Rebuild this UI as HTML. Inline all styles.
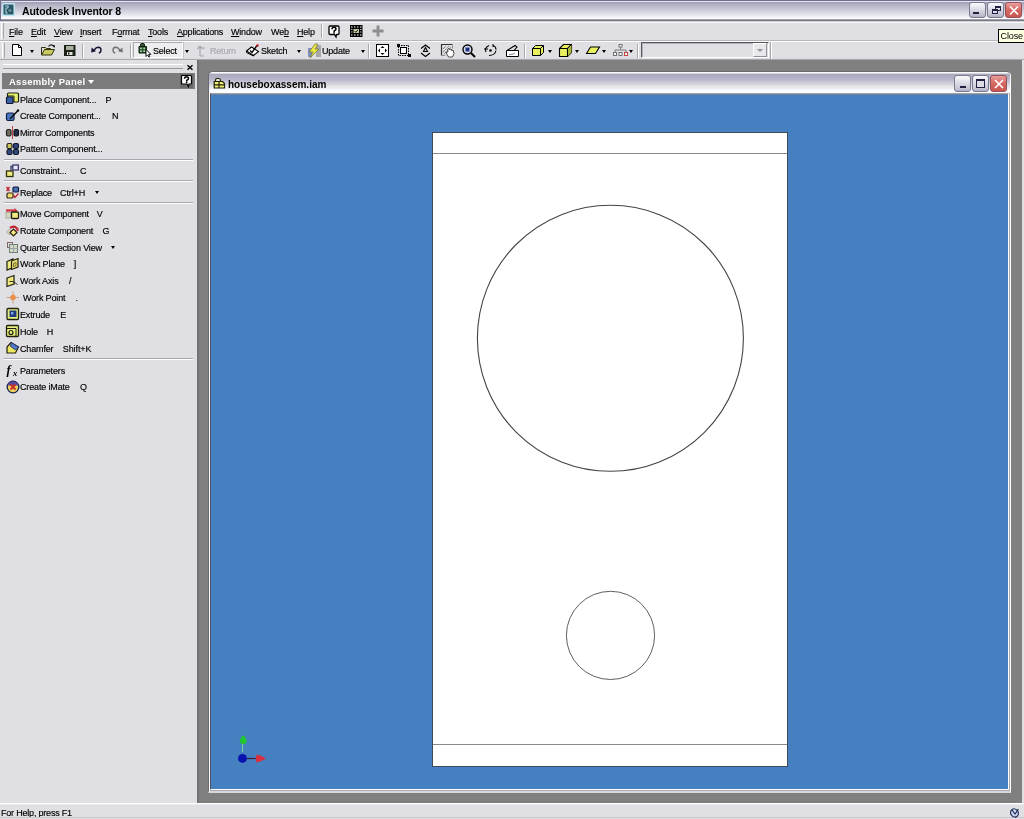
<!DOCTYPE html>
<html><head><meta charset="utf-8">
<style>
*{margin:0;padding:0;box-sizing:border-box}
html,body{width:1024px;height:819px;overflow:hidden;background:#e0dfe3;will-change:transform;font-family:"Liberation Sans",sans-serif;font-size:10px;color:#000;position:relative}
.a{position:absolute}
svg{position:absolute;overflow:visible}
#title{left:0;top:0;width:1024px;height:21px;background:linear-gradient(#70708a 0,#70708a 1px,#e4e4f4 1px,#e4e4f4 2px,#a0a0b4 2px,#acacc0 4px,#b8bac8 6px,#c4c6d2 9px,#d0d2de 11px,#e0e2ea 14px,#eceef4 16px,#fafaff 18px,#fafaff 19px,#a0a0a8 19px,#a0a0a8 20px,#7a7a84 20px)}
#title .t{left:22px;top:5px;font-weight:bold;font-size:10.5px;letter-spacing:-0.1px;white-space:nowrap}
.tb{position:absolute;top:2px;width:17px;height:16px;border:1px solid #7a7a90;border-radius:3px;background:linear-gradient(#fafafe,#e0e0ea 40%,#c4c4d4 80%,#b0b0c4)}
.tb.tbc,.cb.tbc{background:linear-gradient(#eaa0a0,#d86a64 45%,#c85850);border-color:#985058}
#menubar{left:0;top:21px;width:1024px;height:20px;background:linear-gradient(#d0d0d8 0,#d0d0d8 1px,#f8f8fa 1px,#f8f8fa 2px,#e0dfe3 2px,#e0dfe3 19px,#b8b8bc 19px)}
.mi{position:absolute;top:6px;font-size:9px;letter-spacing:-0.2px;white-space:nowrap;-webkit-text-stroke:0.15px #000}
.grip{position:absolute;width:3px;border-left:1px solid #fff;border-right:1px solid #a8a8b0}
#toolbar{left:0;top:41px;width:1024px;height:19px;background:linear-gradient(#fafafa 0,#fafafa 1px,#e0dfe3 1px,#e0dfe3 17px,#dcdce0 17px,#dcdce0 18px,#a8a8ac 18px)}
.vs{position:absolute;width:2px;border-left:1px solid #a8a8b0;border-right:1px solid #fff}
.dd{position:absolute;width:0;height:0;border-left:2.5px solid transparent;border-right:2.5px solid transparent;border-top:3px solid #000}
.tt{position:absolute;top:5px;font-size:9px;letter-spacing:-0.2px;white-space:nowrap;-webkit-text-stroke:0.15px currentColor}
#mdi{left:197px;top:60px;width:825px;height:743px;background:#808080;border-left:2px solid #727274}
#panel{left:0;top:60px;width:197px;height:743px;background:#e0dfe3}
#ph{left:2px;top:73px;width:193px;height:16px;background:#7c7c7c}
#ph .t{left:7px;top:3px;color:#fff;font-size:9.5px;font-weight:bold;letter-spacing:0.25px;white-space:nowrap}
.pi{position:absolute;left:20px;font-size:9px;letter-spacing:-0.15px;white-space:nowrap;line-height:10px;-webkit-text-stroke:0.15px #000}
.sc{position:absolute;font-size:9px;letter-spacing:-0.1px;white-space:nowrap;line-height:10px;-webkit-text-stroke:0.15px #000}
.sep{position:absolute;left:4px;width:189px;height:2px;border-top:1px solid #a8a8b0;border-bottom:1px solid #fff}
#child{left:208px;top:71px;width:803px;height:722px;background:#a8a8b0;border-left:1px solid #6a6a72;border-top:1px solid #6a6a72;border-right:1px solid #fff;border-bottom:2px solid #d8d8dc;border-radius:5px 5px 0 0}
#ctitle{left:209px;top:72px;width:801px;height:21px;border-radius:4px 4px 0 0;background:linear-gradient(#f8f8fc 0,#f8f8fc 1px,#d8d8e0 1px,#d8d8e0 2px,#a8a8b8 2px,#b0b0c4 5px,#b8b8cc 8px,#c8c8d8 10px,#d0d0d8 12px,#dcdce0 13px,#e8e8ec 15px,#f0f0f4 17px,#fafcff 18px,#fafcff 21px)}
#ctitle .t{left:19px;top:6.5px;font-weight:bold;font-size:10px;letter-spacing:0px;white-space:nowrap}
.cb{position:absolute;top:75px;width:17px;height:17px;border:1px solid #7a7a90;border-radius:3px;background:linear-gradient(#fafafe,#e0e0ea 40%,#c4c4d4 85%,#b0b0c4)}
#view{left:210px;top:93px;width:799px;height:697px;background:#4580c0;border-left:1px solid #505060;border-top:1px solid #a0a0a8;border-right:1px solid #fff;border-bottom:1px solid #fff;box-shadow:inset 0 1px 0 #7080a0}
#status{left:0;top:803px;width:1024px;height:16px;background:linear-gradient(#fff 0,#fff 1px,#ececee 1px,#ececee 2px,#e0dfe3 2px)}
#status .t{left:1px;top:4.5px;font-size:9px;letter-spacing:-0.2px;white-space:nowrap;-webkit-text-stroke:0.15px #000}
#tip{left:998px;top:29px;width:30px;height:14px;background:#ffffe1;border:1px solid #000;border-right:none}
#tip span{position:absolute;left:1.5px;top:1px;font-size:9px;letter-spacing:-0.1px;color:#000}
</style></head><body>
<div id="title" class="a"><div class="a" style="left:0;top:0;width:1px;height:21px;background:#70708a"></div>
  <svg style="left:2px;top:3px" width="13" height="13" viewBox="0 0 13 13">
    <rect x="0" y="0" width="13" height="13" fill="#bfe4f0"/>
    <rect x="1.5" y="1.5" width="10" height="10" fill="#2a5a6a"/>
    <path d="M3 3h3v2H4v5h2" stroke="#9ec6d0" stroke-width="1.2" fill="none"/>
    <circle cx="8" cy="7.5" r="2.3" fill="#5a8a9a" stroke="#1a3a48" stroke-width="0.8"/>
  </svg>
  <div class="a t">Autodesk Inventor 8</div>
  <div class="tb" style="left:969px"><div class="a" style="left:3px;top:9px;width:6px;height:2px;background:#202040"></div></div>
  <div class="tb" style="left:987px"><div class="a" style="left:7px;top:3px;width:6px;height:5px;border:1px solid #202040;border-top-width:2px"></div><div class="a" style="left:4px;top:6px;width:6px;height:5px;border:1px solid #202040;border-top-width:2px;background:#d8d8e4"></div></div>
  <div class="tb tbc" style="left:1005px"><svg style="left:3px;top:3px" width="10" height="9"><path d="M1 0.5L9 8.5M9 0.5L1 8.5" stroke="#fff" stroke-width="1.6"/></svg></div>
</div>
<div id="menubar" class="a">
  <div class="grip" style="left:1px;top:2px;height:16px"></div>
  <span class="mi" style="left:9px"><u>F</u>ile</span>
  <span class="mi" style="left:31px"><u>E</u>dit</span>
  <span class="mi" style="left:54px"><u>V</u>iew</span>
  <span class="mi" style="left:80px"><u>I</u>nsert</span>
  <span class="mi" style="left:112px">F<u>o</u>rmat</span>
  <span class="mi" style="left:148px"><u>T</u>ools</span>
  <span class="mi" style="left:177px"><u>A</u>pplications</span>
  <span class="mi" style="left:231px"><u>W</u>indow</span>
  <span class="mi" style="left:271px">We<u>b</u></span>
  <span class="mi" style="left:297px"><u>H</u>elp</span>
  <div class="vs" style="left:321px;top:3px;height:14px"></div>
  <svg style="left:328px;top:4px" width="12" height="13" viewBox="0 0 12 13">
    <path d="M2 1h8q1 0 1 1v6.5q0 1-1 1H8.5l-0.5 2.5-1.5-2.5H2q-1 0-1-1V2q0-1 1-1z" fill="#fff" stroke="#000" stroke-width="1.3"/>
    <path d="M4 4.3q0-2 2-2t2 1.8q0 1.2-1.8 1.8v1" fill="none" stroke="#000" stroke-width="1.5"/>
    <rect x="5.3" y="7.2" width="1.6" height="1.4" fill="#000"/>
  </svg>
  <svg style="left:350px;top:4px" width="12" height="12" viewBox="0 0 12 12">
    <rect x="0" y="0" width="12.5" height="12" fill="#000"/>
    <path d="M1 2h1.5M4 2h1.5M7 2h1.5M10 2h1.5M1 10h1.5M4 10h1.5M7 10h1.5M10 10h1.5" stroke="#fff" stroke-width="1"/>
    <path d="M1 4.5h1.5M1 7h1.5M10 4.5h1.5M10 7h1.5" stroke="#bbb" stroke-width="1"/>
    <rect x="3.5" y="4" width="5.5" height="4" fill="#c8c8a0"/>
    <path d="M4.5 6l1.2 1.2 2.3-2.2" stroke="#202020" stroke-width="1" fill="none"/>
  </svg>
  <svg style="left:372px;top:4px" width="12" height="12" viewBox="0 0 12 12">
    <path d="M6 0.5v11M0.5 6h11" stroke="#8c8c90" stroke-width="2.8"/>
  </svg>
</div>
<div id="toolbar" class="a">
  <div class="grip" style="left:2px;top:2px;height:15px"></div>
  <!-- new -->
  <svg style="left:12px;top:3px" width="10" height="12" viewBox="0 0 10 12">
    <path d="M0.5 0.5h6l3 3v8h-9z" fill="#fff" stroke="#000" stroke-width="1"/>
    <path d="M6.5 0.5v3h3" fill="none" stroke="#000" stroke-width="1"/>
  </svg>
  <div class="dd" style="left:30px;top:9px"></div>
  <!-- open -->
  <svg style="left:41px;top:3px" width="14" height="12" viewBox="0 0 14 12">
    <path d="M0.5 3.5h4l1 1h4v2" fill="#c8c870" stroke="#303010" stroke-width="1"/>
    <path d="M0.5 3.5v7.5h10l3-5.5h-10l-3 5.5" fill="#c8c860" stroke="#303010" stroke-width="1"/>
    <path d="M7.5 2.5q2-2.5 4.5-1l1 1.5" fill="none" stroke="#202020" stroke-width="1.2"/>
    <path d="M11.5 1.5h2v2" fill="none" stroke="#202020" stroke-width="1"/>
  </svg>
  <!-- save -->
  <svg style="left:64px;top:4px" width="12" height="12" viewBox="0 0 12 12">
    <rect x="0" y="0" width="11.5" height="11" fill="#1a2018"/>
    <rect x="2" y="1" width="7.5" height="4" fill="#a8b0a0"/>
    <rect x="3" y="7" width="5.5" height="3" fill="#e0e0d8"/>
    <rect x="4" y="7.5" width="1.5" height="2" fill="#1a2018"/>
  </svg>
  <div class="vs" style="left:82px;top:3px;height:14px"></div>
  <!-- undo -->
  <svg style="left:91px;top:4px" width="11" height="9" viewBox="0 0 11 9">
    <path d="M3.2 5Q5 2.2 7.3 2.2Q10 2.4 10 5Q10 7.4 7.8 8" fill="none" stroke="#101030" stroke-width="1.4"/>
    <path d="M0.2 7.5L0.6 2.5L5 6.3z" fill="#101030"/>
  </svg>
  <!-- redo -->
  <svg style="left:112px;top:4px" width="11" height="9" viewBox="0 0 11 9">
    <path d="M7.8 5Q6 2.2 3.7 2.2Q1 2.4 1 5Q1 7.4 3.2 8" fill="none" stroke="#707074" stroke-width="1.4"/>
    <path d="M10.8 7.5L10.4 2.5L6 6.3z" fill="#707074"/>
  </svg>
  <div class="vs" style="left:130px;top:3px;height:14px"></div>
  <!-- select button -->
  <div class="a" style="left:133px;top:1px;width:50px;height:16px;background:#eeeef0;border-left:1px solid #a8a8b0;border-top:1px solid #a8a8b0;border-right:1px solid #fff;border-bottom:1px solid #fff"></div>
  <svg style="left:138px;top:2px" width="14" height="14" viewBox="0 0 14 14">
    <path d="M2.5 3V1.8q0-1.3 1.3-1.3h1.4q1.3 0 1.3 1.3V3" fill="#3a5a38" stroke="#101810" stroke-width="1"/>
    <path d="M1 3.5h7.5v6.5H1z" fill="#2e5530" stroke="#101810" stroke-width="1"/>
    <circle cx="3" cy="5.3" r="0.9" fill="#b0e8b0"/><circle cx="6.2" cy="5.3" r="0.9" fill="#b0e8b0"/>
    <circle cx="3" cy="8.2" r="0.9" fill="#b0e8b0"/><circle cx="6.2" cy="8.2" r="0.9" fill="#b0e8b0"/>
    <path d="M8 6.5v7l1.6-1.6 1.3 2.2 1-.5-1.2-2.2h2.2z" fill="#fff" stroke="#000" stroke-width="0.9"/>
  </svg>
  <span class="tt" style="left:153px">Select</span>
  <div class="a" style="left:183px;top:1px;width:10px;height:16px;border-left:1px solid #c0c0c8"></div>
  <div class="dd" style="left:185px;top:9px"></div>
  <!-- return -->
  <svg style="left:197px;top:3px" width="10" height="13" viewBox="0 0 10 13">
    <path d="M3 12V3M3 2L0.5 5M3 2l2.5 3M3 12h4M5 4h3" fill="none" stroke="#a8a8b0" stroke-width="1.2"/>
  </svg>
  <span class="tt" style="left:210px;color:#a8a8b0">Return</span>
  <!-- sketch -->
  <svg style="left:246px;top:3px" width="14" height="12" viewBox="0 0 14 12">
    <path d="M0.5 7l5-4 7 4.5-5 4z" fill="#fff" stroke="#000" stroke-width="1.1"/>
    <path d="M0.5 7v1.5l7 3.5" fill="none" stroke="#000" stroke-width="1"/>
    <path d="M4 6.5l2 2 5-7" fill="none" stroke="#000" stroke-width="1.3"/>
    <circle cx="11.5" cy="1.5" r="1.3" fill="#c02020"/>
  </svg>
  <span class="tt" style="left:261px">Sketch</span>
  <div class="dd" style="left:297px;top:9px"></div>
  <!-- update -->
  <svg style="left:308px;top:3px" width="13" height="14" viewBox="0 0 13 14">
    <rect x="0" y="4" width="4" height="9" fill="#8090c0"/>
    <rect x="8" y="1" width="5" height="12" fill="#a8a8a8"/>
    <path d="M7 0L1 8h4l-3 6 9-9H7l3-5z" fill="#e8e840" stroke="#606020" stroke-width="0.6"/>
  </svg>
  <span class="tt" style="left:322px">Update</span>
  <div class="dd" style="left:361px;top:9px"></div>
  <div class="vs" style="left:368px;top:3px;height:14px"></div>
  <!-- zoom all -->
  <svg style="left:376px;top:3px" width="13" height="13" viewBox="0 0 13 13">
    <rect x="0.5" y="0.5" width="12" height="12" fill="#fff" stroke="#000" stroke-width="1"/>
    <path d="M6.5 2L4.5 4h4zM6.5 11l-2-2h4zM2 6.5l2-2v4zM11 6.5l-2-2v4z" fill="#000"/>
  </svg>
  <!-- zoom window -->
  <svg style="left:397px;top:3px" width="14" height="13" viewBox="0 0 14 13">
    <rect x="1.5" y="1.5" width="10" height="10" fill="none" stroke="#000" stroke-width="1" stroke-dasharray="1.5 1"/>
    <rect x="3.5" y="3.5" width="6" height="6" fill="#fff" stroke="#000" stroke-width="1"/>
    <rect x="0" y="0" width="3" height="3" fill="#000"/><rect x="11" y="10" width="3" height="3" fill="#000"/>
  </svg>
  <!-- zoom -->
  <svg style="left:419px;top:3px" width="13" height="13" viewBox="0 0 13 13">
    <path d="M2 4.5L6.5 1 11 4.5M2 9l4.5 3.5L11 9M6.5 3.5l-2 4h4z" fill="none" stroke="#000" stroke-width="1.1"/>
  </svg>
  <!-- pan -->
  <svg style="left:441px;top:3px" width="14" height="14" viewBox="0 0 14 14">
    <path d="M0.5 11.5V0.5h11" fill="none" stroke="#303030" stroke-width="1.2"/>
    <path d="M0.5 11.5h4M11.5 0.5v4" stroke="#909090" stroke-width="1"/>
    <path d="M2 5l3-3M2 8l6-6M3 10l7-7M6 10l5-5M8 11l3-3" stroke="#505050" stroke-width="0.9" stroke-dasharray="1 0.8"/>
    <path d="M5 8.5l2.5 4.5h4l1.5-3.5-1-3.5-1.5 0.5-0.5-1.5-1.5 0.5-0.5-1-1.2 0.5v3z" fill="#fff" stroke="#202020" stroke-width="0.8"/>
  </svg>
  <!-- zoom selected -->
  <svg style="left:462px;top:3px" width="14" height="14" viewBox="0 0 14 14">
    <circle cx="5.5" cy="5.5" r="4.5" fill="#d8dcf0" stroke="#000" stroke-width="1.4"/>
    <rect x="3.5" y="3.5" width="4" height="4" fill="#203080"/>
    <path d="M9 9l4 4" stroke="#000" stroke-width="2"/>
  </svg>
  <!-- rotate -->
  <svg style="left:484px;top:3px" width="13" height="13" viewBox="0 0 13 13">
    <path d="M2 8q-2-4 3-6.5M5 11.5q6 0 7-5M9 1.5q3 1 3 4" fill="none" stroke="#000" stroke-width="1.1"/>
    <circle cx="6.5" cy="6.5" r="1.3" fill="#000"/>
    <path d="M0 5h4M9 0v3" stroke="#000" stroke-width="1"/>
  </svg>
  <!-- look at -->
  <svg style="left:506px;top:3px" width="13" height="13" viewBox="0 0 13 13">
    <path d="M0.5 6.5h12v6h-12z" fill="#fff" stroke="#000" stroke-width="1"/>
    <path d="M1 6.5l8-5 2 1.5-3 3.5" fill="none" stroke="#000" stroke-width="1.1"/>
    <path d="M3 11l2-1 1 .5 3-1.5" fill="none" stroke="#606060" stroke-width="0.8"/>
  </svg>
  <div class="vs" style="left:524px;top:3px;height:14px"></div>
  <!-- cube -->
  <svg style="left:532px;top:4px" width="12" height="11" viewBox="0 0 12 11">
    <path d="M0.5 3.5l3-3h8v7l-3 3h-8z" fill="#e8f060" stroke="#000" stroke-width="1"/>
    <path d="M0.5 3.5h8v7M8.5 3.5l3-3" fill="none" stroke="#000" stroke-width="1"/>
    <path d="M1 0.5h3" stroke="#000" stroke-width="0"/>
  </svg>
  <div class="dd" style="left:548px;top:9px"></div>
  <!-- box -->
  <svg style="left:559px;top:3px" width="13" height="13" viewBox="0 0 13 13">
    <path d="M0.5 4.5l4-4h8v8l-4 4h-8z" fill="#e8f060" stroke="#000" stroke-width="1.1"/>
    <path d="M0.5 4.5h8v8M8.5 4.5l4-4" fill="none" stroke="#000" stroke-width="1.1"/>
    <path d="M9 12l3.5-3.5V1L9 4.5z" fill="#b0b840"/>
  </svg>
  <div class="dd" style="left:575px;top:9px"></div>
  <!-- plane -->
  <svg style="left:586px;top:5px" width="14" height="8" viewBox="0 0 14 8">
    <path d="M0.5 7.5l4-6.5h9l-4 6.5z" fill="#e8f060" stroke="#000" stroke-width="1.1"/>
  </svg>
  <div class="dd" style="left:602px;top:9px"></div>
  <!-- tree -->
  <svg style="left:613px;top:3px" width="15" height="13" viewBox="0 0 15 13">
    <rect x="6" y="0.5" width="3" height="2.5" fill="#fff" stroke="#707070" stroke-width="1"/>
    <path d="M7.5 3v2.5M2 8V6h11v2" fill="none" stroke="#707070" stroke-width="0.9"/>
    <rect x="0.5" y="8.5" width="3" height="3" fill="#fff" stroke="#707070" stroke-width="1"/>
    <rect x="6" y="8.5" width="3" height="3" fill="#fff" stroke="#707070" stroke-width="1"/>
    <rect x="11.5" y="8.5" width="3" height="3" fill="#fff" stroke="#c04040" stroke-width="1"/>
  </svg>
  <div class="dd" style="left:629px;top:9px"></div>
  <div class="vs" style="left:637px;top:3px;height:14px"></div>
  <!-- combo -->
  <div class="a" style="left:641px;top:1px;width:128px;height:16px;background:#e0dfe3;border-left:1px solid #58585e;border-top:1px solid #58585e;border-right:1px solid #fff;border-bottom:1px solid #fff;box-shadow:inset 1px 1px 0 #b0b0b8"></div>
  <div class="a" style="left:753px;top:2px;width:14px;height:14px;background:#e8e8ec;border-left:1px solid #fff;border-top:1px solid #fff;border-right:1px solid #909098;border-bottom:1px solid #909098"></div>
  <div class="dd" style="left:757px;top:8px;border-top-color:#909098;border-left-width:3px;border-right-width:3px;border-top-width:3px"></div>
  <div class="vs" style="left:770px;top:1px;height:17px"></div>
</div>
<div id="mdi" class="a"></div>
<div id="panel" class="a"></div>
<div id="ph" class="a"><div class="a t">Assembly Panel</div><div class="dd" style="left:86px;top:7px;border-top-color:#fff;border-left-width:3.5px;border-right-width:3.5px;border-top-width:4px"></div><svg style="left:178px;top:1px" width="13" height="14" viewBox="0 0 13 14"><rect x="0" y="0" width="13" height="14" fill="#6a6a6a"/><path d="M2.5 1.5h8q1 0 1 1v6.5q0 1-1 1H9l-0.5 2.5-1.5-2.5H2.5q-1 0-1-1V2.5q0-1 1-1z" fill="#fff" stroke="#000" stroke-width="1.2"/><path d="M4.5 4.8q0-2 2-2t2 1.8q0 1.2-1.8 1.8v1" fill="none" stroke="#000" stroke-width="1.5"/><rect x="5.8" y="7.7" width="1.6" height="1.4" fill="#000"/></svg></div>
<div class="a" style="left:3px;top:64px;width:180px;height:5px;border-top:1px solid #fff;border-bottom:1px solid #98989c"></div>
<svg style="left:187px;top:64.5px" width="6" height="5" viewBox="0 0 6 5"><path d="M0.5 0.3l5 4.4M5.5 0.3l-5 4.4" stroke="#000" stroke-width="1.4"/></svg>
<div id="panelc" class="a" style="left:0;top:0;width:197px;height:400px">
<span class="pi" style="left:20px;top:94.6px">Place Component...</span>
<span class="sc" style="left:105.5px;top:94.6px">P</span>
<span class="pi" style="left:20px;top:110.9px">Create Component...</span>
<span class="sc" style="left:112px;top:110.9px">N</span>
<span class="pi" style="left:20px;top:127.5px">Mirror Components</span>
<span class="pi" style="left:20px;top:144.4px">Pattern Component...</span>
<span class="pi" style="left:20px;top:166.3px">Constraint...</span>
<span class="sc" style="left:80px;top:166.3px">C</span>
<span class="pi" style="left:20px;top:187.6px">Replace</span>
<span class="sc" style="left:60px;top:187.6px">Ctrl+H</span>
<span class="pi" style="left:20px;top:209.4px">Move Component</span>
<span class="sc" style="left:96.8px;top:209.4px">V</span>
<span class="pi" style="left:20px;top:225.9px">Rotate Component</span>
<span class="sc" style="left:102.4px;top:225.9px">G</span>
<span class="pi" style="left:20px;top:242.9px">Quarter Section View</span>
<span class="pi" style="left:20px;top:259.4px">Work Plane</span>
<span class="sc" style="left:73.8px;top:259.4px">]</span>
<span class="pi" style="left:20px;top:275.9px">Work Axis</span>
<span class="sc" style="left:69px;top:275.9px">/</span>
<span class="pi" style="left:23px;top:292.7px">Work Point</span>
<span class="sc" style="left:75.4px;top:292.7px">.</span>
<span class="pi" style="left:20px;top:310.1px">Extrude</span>
<span class="sc" style="left:60.3px;top:310.1px">E</span>
<span class="pi" style="left:20px;top:326.9px">Hole</span>
<span class="sc" style="left:46.7px;top:326.9px">H</span>
<span class="pi" style="left:20px;top:343.7px">Chamfer</span>
<span class="sc" style="left:62.8px;top:343.7px">Shift+K</span>
<span class="pi" style="left:20px;top:365.5px">Parameters</span>
<span class="pi" style="left:20px;top:382.3px">Create iMate</span>
<span class="sc" style="left:80px;top:382.3px">Q</span>
<div class="sep" style="top:159px"></div>
<div class="sep" style="top:180px"></div>
<div class="sep" style="top:202px"></div>
<div class="sep" style="top:358px"></div>
<div class="dd" style="left:95px;top:191px;border-left-width:2.5px;border-right-width:2.5px;border-top-width:3px"></div>
<div class="dd" style="left:111px;top:246px;border-left-width:2.5px;border-right-width:2.5px;border-top-width:3px"></div>
<svg style="left:0;top:0" width="197" height="400" viewBox="0 0 197 400">
 <!-- place -->
 <rect x="7.5" y="93" width="11" height="9" rx="1" fill="#e8f070" stroke="#202010" stroke-width="1.2"/>
 <path d="M8 96h6v6" fill="none" stroke="#202010" stroke-width="1"/>
 <rect x="6.5" y="97" width="6.5" height="6.5" rx="1" fill="#3a60a8" stroke="#101838" stroke-width="1.2"/>
 <!-- create -->
 <rect x="6.5" y="113" width="7.5" height="7.5" rx="1.5" fill="#4a78c0" stroke="#102048" stroke-width="1.2"/>
 <path d="M10 119L18 110.5" stroke="#101010" stroke-width="1.6"/>
 <circle cx="18" cy="110.5" r="1.2" fill="#101010"/>
 <!-- mirror -->
 <rect x="6.5" y="129.5" width="4.5" height="6.5" rx="1.5" fill="#707060" stroke="#202020" stroke-width="1.2"/>
 <rect x="14" y="129.5" width="4.5" height="6.5" rx="1.5" fill="#203050" stroke="#101010" stroke-width="1.2"/>
 <path d="M12.5 126v13" stroke="#c04050" stroke-width="1"/>
 <!-- pattern -->
 <rect x="7" y="143.5" width="5" height="5" rx="1.5" fill="#c8c860" stroke="#202020" stroke-width="1.2"/>
 <rect x="13.5" y="143.5" width="5" height="5" rx="1.5" fill="#304880" stroke="#101828" stroke-width="1.2"/>
 <rect x="7" y="149.5" width="5" height="5" rx="1.5" fill="#304880" stroke="#101828" stroke-width="1.2"/>
 <rect x="13.5" y="149.5" width="5" height="5" rx="1.5" fill="#304880" stroke="#101828" stroke-width="1.2"/>
 <!-- constraint -->
 <rect x="6.5" y="171" width="6.5" height="5.5" fill="#f0e880" stroke="#303010" stroke-width="1.3"/>
 <path d="M11 171v-4.5h2" fill="none" stroke="#383860" stroke-width="1.3"/>
 <rect x="12.8" y="165" width="5.5" height="5" fill="#e8e8f8" stroke="#383870" stroke-width="1.3"/>
 <!-- replace -->
 <path d="M6.5 187l3 4M9.5 187l-3 4" stroke="#c02030" stroke-width="1.3"/>
 <rect x="13" y="187" width="5.5" height="5" rx="1" fill="#4a70b8" stroke="#101838" stroke-width="1.2"/>
 <rect x="7" y="193" width="6" height="5" rx="1" fill="#f0e070" stroke="#302010" stroke-width="1.2"/>
 <path d="M13.5 195l1.5 2.5 3.5-4" fill="none" stroke="#c02030" stroke-width="1.3"/>
 <!-- move -->
 <path d="M6 210.5h9" stroke="#d03040" stroke-width="2.2"/>
 <path d="M14.5 208l3 2.5-3 2.5z" fill="#d03040"/>
 <rect x="6" y="212.5" width="5" height="5.5" fill="#d8d8c0" stroke="#a0a090" stroke-width="0.8"/>
 <rect x="11.5" y="212" width="7" height="6.5" rx="1" fill="#f0e880" stroke="#202010" stroke-width="1.3"/>
 <!-- rotate -->
 <path d="M10 228q4-3 7 0.5" fill="none" stroke="#c02030" stroke-width="2.2"/>
 <path d="M15.5 230l3-2.5v4z" fill="#c02030"/>
 <path d="M6.5 232l3-3 3 3-3 3z" fill="#d8d8c0" stroke="#a0a090" stroke-width="0.8"/>
 <path d="M10 232.5l3.5-3.5 3.5 3.5-3.5 3.5z" fill="#f0e880" stroke="#302010" stroke-width="1.2"/>
 <!-- quarter section -->
 <rect x="7.5" y="242.5" width="5" height="5" fill="none" stroke="#806868" stroke-width="1"/>
 <rect x="9.5" y="244.5" width="8" height="8" fill="#d0d8c0" stroke="#708078" stroke-width="1"/>
 <path d="M13.5 244.5v8M9.5 248.5h8" stroke="#8898a8" stroke-width="0.8"/>
 <!-- work plane -->
 <path d="M7 261.5l6-2.5v8.5l-6 2.5z" fill="#f0e880" stroke="#202010" stroke-width="1.2"/>
 <path d="M11.5 261l6.5-2.5v8.5l-6.5 2.5z" fill="#e8e070" stroke="#202010" stroke-width="1.2"/>
 <path d="M13.5 263.5l2.5-1v3l-2.5 1z" fill="none" stroke="#605020" stroke-width="0.8"/>
 <!-- work axis -->
 <path d="M7 278l7-2.5v8.5l-7 2.5z" fill="#f0e880" stroke="#202010" stroke-width="1.2"/>
 <path d="M9.5 281.5h3.5l4.5 3" fill="none" stroke="#202010" stroke-width="0.9"/>
 <!-- work point -->
 <path d="M6.5 297.5h12.5M13 291.5v12" stroke="#d0a080" stroke-width="1"/>
 <circle cx="13" cy="297.5" r="2.8" fill="#e89050"/>
 <!-- extrude -->
 <rect x="7" y="308.5" width="11.5" height="11" rx="1" fill="#e8f080" stroke="#202010" stroke-width="1.3"/>
 <rect x="9.5" y="310.5" width="7" height="6.5" fill="#203880"/>
 <rect x="11" y="312" width="2.5" height="2.5" fill="#80a0e0"/>
 <!-- hole -->
 <rect x="6.5" y="325.5" width="12" height="11" rx="1" fill="#e8f080" stroke="#202010" stroke-width="1.3"/>
 <path d="M6.5 328.5h9.5v8" fill="none" stroke="#202010" stroke-width="1"/>
 <circle cx="11" cy="332.5" r="2" fill="none" stroke="#202010" stroke-width="1.2"/>
 <!-- chamfer -->
 <path d="M7 347l4-4.5 7.5 4.5-3 6h-8.5z" fill="#f0e860" stroke="#202010" stroke-width="1.2"/>
 <path d="M11 342.5l7.5 4.5-3 3-5-3.5z" fill="#5078c8" stroke="#203060" stroke-width="0.8"/>
 <!-- fx -->
 <text x="6.5" y="373.5" font-family="Liberation Serif" font-style="italic" font-weight="bold" font-size="12.5">f</text>
 <text x="13" y="375.5" font-family="Liberation Serif" font-style="italic" font-weight="bold" font-size="8.5">x</text>
 <!-- imate -->
 <circle cx="13" cy="387" r="5.8" fill="#f0d060" stroke="#102048" stroke-width="1.3"/>
 <path d="M7.6 385.5a5.6 5.6 0 0 1 10.8 0z" fill="#5a4aa0"/>
 <path d="M10.5 384.5l5 5M15.5 384.5l-5 5" stroke="#c83020" stroke-width="1.8"/>
</svg>
</div>

<div id="child" class="a"></div>
<div class="a" style="left:209px;top:76px;width:1px;height:716px;background:#fff"></div>
<div id="ctitle" class="a"><div class="a t">houseboxassem.iam</div>
  <svg style="left:4px;top:6px" width="13" height="11" viewBox="0 0 13 11">
    <path d="M2.5 3.5v-1q0-2 1.5-2h2q1.5 0 1.5 2v1" fill="#e8e8d0" stroke="#202010" stroke-width="1.2"/>
    <path d="M1.2 3.5h8.5l1.8 2v4.5h-10.3z" fill="#f0f070" stroke="#202010" stroke-width="1.2"/>
    <path d="M1 6.8h10.5M6 3.6v6.4" stroke="#202010" stroke-width="1.2"/>
  </svg>
</div>
<div class="cb" style="left:954px"><div class="a" style="left:5px;top:10px;width:6px;height:2px;background:#202040"></div></div>
<div class="cb" style="left:972px"><div class="a" style="left:3px;top:3px;width:9px;height:9px;border:1px solid #202040;border-top-width:2px;background:#dcdce6"></div></div>
<div class="cb tbc" style="left:990px"><svg style="left:3px;top:3px" width="10" height="10"><path d="M1 1L9 9M9 1L1 9" stroke="#fff" stroke-width="1.6"/></svg></div>
<div id="view" class="a">
  <svg style="left:0;top:0" width="797" height="695" viewBox="211 94 797 695">
    <rect x="432.5" y="132.5" width="355" height="634" fill="#fff" stroke="#404a58" stroke-width="1"/>
    <path d="M433 153.5H787M433 744.5H787" stroke="#8a8a8a" stroke-width="1.2"/>
    <circle cx="610.4" cy="338.3" r="133" fill="none" stroke="#444" stroke-width="1.1"/>
    <circle cx="610.5" cy="635.4" r="44.1" fill="none" stroke="#606060" stroke-width="1"/>
    <path d="M242.5 752V744" stroke="#70d0a0" stroke-width="1"/>
    <path d="M243.3 735.8Q245 736 246.6 740.5Q247 744 243.3 744Q239.6 744 240 740.5Q241.6 736 243.3 735.8Z" fill="#22c830"/>
    <path d="M247 758.5H256" stroke="#402040" stroke-width="1.2"/>
    <path d="M256.5 754.5Q261 755 266 758.5Q261 762 256.5 762.5Q255 758.5 256.5 754.5Z" fill="#d83040"/>
    <circle cx="242.5" cy="758.4" r="4.4" fill="#0810b0"/>
  </svg>
</div>
<div id="status" class="a"><div class="a t">For Help, press F1</div>
  <div class="a" style="left:0;top:14px;width:1024px;height:1px;background:#c8c8cc"></div>
  <svg style="left:1009px;top:4px" width="11" height="11" viewBox="0 0 11 11">
    <ellipse cx="5.5" cy="6" rx="3.8" ry="4.2" transform="rotate(-40 5.5 6)" fill="#c8d4f0" stroke="#303860" stroke-width="1.2"/>
    <path d="M3 3l3 4 3.5-5" fill="none" stroke="#202850" stroke-width="1.1"/>
    <path d="M6.5 10.5l0.5-1" stroke="#202850" stroke-width="1"/>
  </svg>
</div>
<div id="tip" class="a"><span>Close</span></div>
</body></html>
